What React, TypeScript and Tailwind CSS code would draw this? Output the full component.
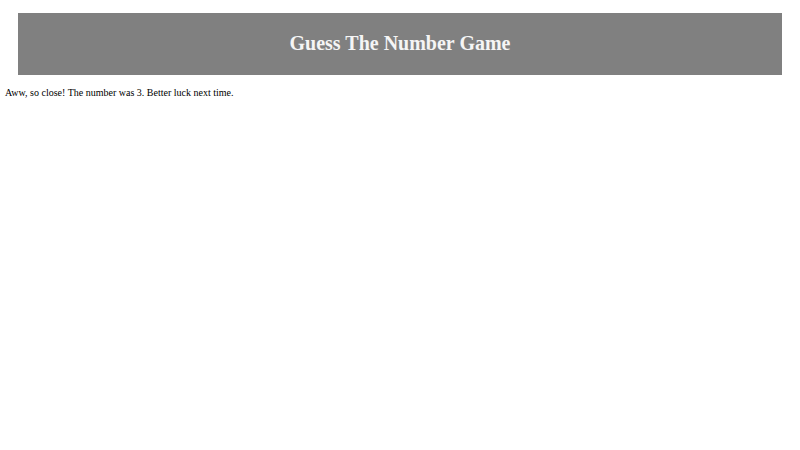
export default function App() {
  return (
    <div className="min-h-[450px] bg-white px-[5px] pt-[13px]" style={{ fontFamily: '"Liberation Serif", serif' }}>
      <header className="mx-[13px] flex h-[62px] items-center justify-center bg-[#808080] pb-[2px]">
        <h1 className="text-[20px] font-bold text-[#f5f5f5]">Guess The Number Game</h1>
      </header>
      <p className="mt-[11px] text-[10px] leading-[13px] text-black">
        Aww, so close! The number was 3. Better luck next time.
      </p>
    </div>
  );
}
